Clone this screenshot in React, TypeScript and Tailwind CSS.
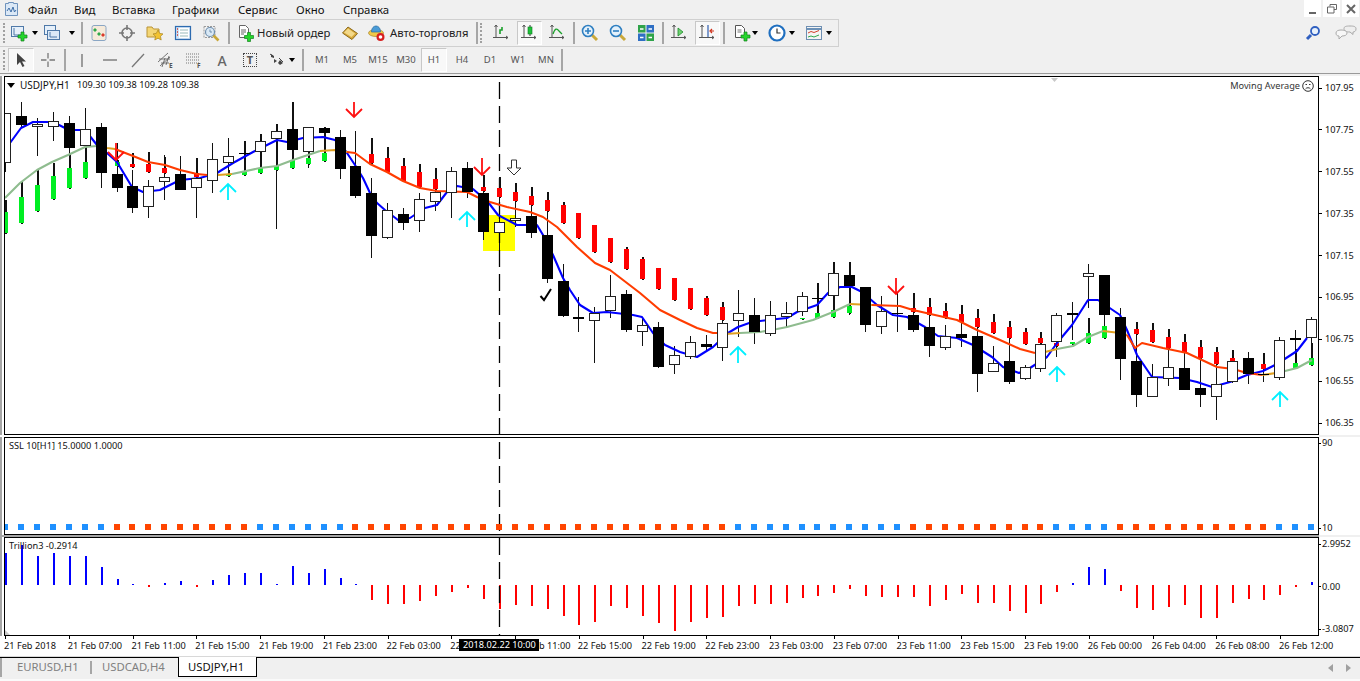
import type { ReactNode } from "react"

type Candle = [number, number, number, number, "w" | "b"]
type HaBar = [number, number, number, number, "r" | "g"]

// body top, body bottom, high, low (page pixels), index = bar number
const candles: Candle[] = [
  [113, 163, 113, 172, "w"], [116, 125, 102, 127, "b"], [124, 127, 118, 156, "w"], [121, 127, 112, 141, "w"],
  [123, 148, 116, 158, "b"], [129, 146, 108, 178, "w"], [127, 173, 123, 188, "b"], [174, 188, 143, 192, "b"],
  [186, 208, 170, 213, "b"], [186, 207, 180, 218, "w"], [177, 182, 155, 200, "w"], [174, 190, 156, 190, "b"],
  [178, 188, 158, 218, "w"], [159, 181, 143, 193, "w"], [156, 163, 138, 173, "w"], [153, 154, 141, 176, "b"],
  [141, 152, 134, 171, "w"], [131, 139, 124, 229, "w"], [129, 150, 102, 160, "b"], [127, 152, 127, 168, "w"],
  [128, 133, 127, 150, "b"], [137, 169, 130, 179, "b"], [166, 196, 131, 198, "b"], [193, 236, 178, 258, "b"],
  [210, 238, 203, 239, "w"], [214, 223, 208, 230, "b"], [199, 221, 193, 232, "w"], [192, 202, 168, 211, "w"],
  [171, 193, 167, 218, "w"], [168, 192, 162, 198, "b"], [193, 232, 175, 240, "b"], [222, 233, 177, 262, "w"],
  [218, 221, 183, 227, "w"], [216, 233, 187, 238, "b"], [235, 279, 192, 283, "b"], [281, 316, 264, 317, "b"],
  [317, 319, 297, 332, "b"], [313, 321, 307, 363, "w"], [296, 311, 275, 318, "w"], [294, 330, 290, 332, "b"],
  [325, 332, 317, 346, "w"], [327, 367, 322, 368, "b"], [355, 365, 346, 374, "w"], [342, 357, 336, 359, "w"],
  [344, 347, 335, 350, "b"], [323, 348, 302, 361, "w"], [313, 321, 290, 337, "w"], [315, 332, 298, 344, "b"],
  [315, 334, 301, 336, "w"], [313, 317, 302, 328, "w"], [296, 312, 292, 316, "w"], [298, 299, 283, 318, "b"],
  [273, 296, 262, 318, "w"], [275, 286, 262, 315, "b"], [287, 325, 287, 332, "b"], [311, 327, 296, 334, "w"],
  [313, 314, 293, 332, "b"], [315, 330, 293, 332, "b"], [327, 346, 298, 357, "b"], [336, 348, 325, 350, "w"],
  [334, 338, 305, 347, "b"], [336, 374, 309, 392, "b"], [363, 372, 346, 372, "w"], [361, 382, 321, 384, "b"],
  [367, 379, 365, 380, "w"], [344, 369, 332, 372, "w"], [315, 342, 313, 357, "w"], [313, 315, 302, 340, "b"],
  [273, 277, 264, 308, "w"], [275, 315, 275, 338, "b"], [317, 359, 308, 380, "b"], [361, 395, 322, 407, "b"],
  [377, 397, 364, 397, "w"], [367, 379, 329, 386, "w"], [368, 390, 334, 390, "b"], [388, 395, 340, 407, "b"],
  [384, 397, 347, 420, "w"], [361, 382, 350, 383, "w"], [358, 374, 352, 384, "b"], [374, 375, 353, 382, "b"],
  [340, 378, 337, 380, "w"], [338, 340, 330, 365, "b"], [319, 338, 317, 365, "w"],
]

// bar number, wick top, body top, body bottom, colour
const haBars: HaBar[] = [
  [0, 200, 212, 233, "g"], [1, 181, 197, 223, "g"], [2, 169, 185, 211, "g"], [3, 163, 176, 199, "g"],
  [4, 153, 168, 188, "g"], [5, 147, 162, 178, "g"], [7, 160, 162, 166, "g"], [8, 153, 164, 167, "r"],
  [9, 152, 164, 172, "r"], [10, 157, 168, 173, "r"], [12, 158, 173, 177, "r"], [14, 170, 174, 176, "g"],
  [15, 141, 172, 175, "g"], [16, 134, 168, 173, "g"], [17, 124, 166, 170, "g"], [18, 102, 160, 168, "g"],
  [19, 127, 158, 164, "g"], [20, 127, 153, 161, "g"],
  [23, 138, 154, 163, "r"], [24, 147, 158, 172, "r"], [25, 158, 166, 181, "r"], [26, 164, 172, 187, "r"],
  [27, 168, 179, 189, "r"], [30, 175, 187, 191, "r"], [31, 177, 188, 197, "r"], [32, 183, 192, 201, "r"],
  [33, 187, 196, 205, "r"], [34, 192, 200, 211, "r"], [35, 202, 205, 223, "r"], [36, 213, 213, 238, "r"],
  [37, 225, 225, 252, "r"], [38, 238, 238, 262, "r"], [39, 247, 249, 269, "r"], [40, 257, 259, 279, "r"],
  [41, 268, 268, 289, "r"], [42, 278, 278, 300, "r"], [43, 288, 288, 309, "r"], [44, 296, 298, 315, "r"],
  [45, 302, 307, 320, "r"], [50, 318, 318, 319, "g"], [51, 283, 313, 318, "g"], [52, 262, 310, 317, "g"],
  [53, 262, 306, 313, "g"], [57, 293, 308, 312, "r"], [58, 298, 307, 315, "r"], [59, 303, 311, 318, "r"],
  [60, 305, 314, 322, "r"], [61, 309, 318, 327, "r"], [62, 314, 322, 333, "r"], [63, 321, 327, 338, "r"],
  [64, 328, 332, 344, "r"], [65, 332, 338, 343, "r"], [66, 338, 343, 346, "r"], [67, 342, 342, 344, "g"],
  [68, 318, 333, 343, "g"], [69, 326, 326, 338, "g"], [71, 322, 329, 334, "r"], [72, 323, 330, 342, "r"],
  [73, 329, 337, 348, "r"], [74, 334, 342, 352, "r"], [75, 340, 347, 358, "r"], [76, 347, 352, 364, "r"],
  [77, 350, 358, 361, "r"], [79, 353, 364, 369, "r"], [81, 349, 363, 368, "g"], [82, 343, 358, 365, "g"],
]

const blueLine =
  "10,143 21,128 33,122 53,122 69,130 85,130 101,150 107,153 117,162 132,187 143,192 160,190 180,180 200,178 217,173 233,163 253,152 277,140 287,142 303,138 323,137 335,140 345,150 355,165 363,178 370,193 377,203 385,210 398,220 410,218 425,208 437,205 447,192 457,186 473,189 488,202 498,215 517,225 537,225 543,235 553,255 563,278 570,290 580,305 593,313 607,312 633,315 642,317 653,333 665,345 680,352 697,357 713,347 728,333 738,327 752,322 777,319 787,318 797,312 817,305 828,293 840,287 852,287 862,292 877,305 893,315 907,317 925,327 938,336 957,338 973,345 992,357 1003,367 1019,373 1030,368 1047,357 1057,343 1072,325 1088,300 1098,300 1120,315 1127,330 1137,355 1152,377 1180,378 1197,382 1212,387 1230,382 1247,375 1263,371 1277,364 1297,351 1307,338"

const redLines = [
  "115,149 133,156 148,162 165,165 180,170 197,174 207,175",
  "347,152 355,153 370,164 387,172 403,181 420,188 437,191 467,192 477,197 490,202 507,207 530,212 543,217 557,227 577,247 595,263 610,270 640,293 660,310 680,320 697,328 713,333 725,333",
  "872,305 900,306 913,310 957,320 977,330 1000,340 1020,349 1035,353",
  "1127,335 1135,348 1142,343 1163,348 1187,353 1217,367 1233,369 1247,373 1262,375",
]
const greenLines = [
  "5,198 20,183 37,170 52,162 68,155 85,147 97,146",
  "232,174 260,168 277,166 293,160 320,151",
  "740,333 760,332 777,329 787,327 813,320 833,312 850,304",
  "1057,349 1073,346 1088,337 1103,331",
  "1276,373 1285,371 1297,368 1312,360",
]
const goldLines = [
  "97,146 107,148 115,149",
  "207,175 218,175 232,174",
  "320,151 335,150 347,152",
  "725,334 740,333",
  "850,304 872,305",
  "1035,353 1045,352 1057,349",
  "1103,331 1120,333 1127,335",
  "1262,375 1276,373",
]

const downArrows: [number, number, number][] = [[354, 102, 117], [482, 158, 175], [896, 278, 294], [116, 143, 160]]
const upArrows: [number, number, number][] = [[228, 184, 200], [467, 212, 227], [738, 347, 363], [1057, 367, 382], [1280, 392, 407]]

const priceLabels = ["107.95", "107.75", "107.55", "107.35", "107.15", "106.95", "106.75", "106.55", "106.35"]
// two labels are partly covered by the crosshair's date box, only the visible part is kept
const timeLabels = [
  "21 Feb 2018", "21 Feb 07:00", "21 Feb 11:00", "21 Feb 15:00", "21 Feb 19:00", "21 Feb 23:00", "22 Feb 03:00",
  "22", "b 11:00", "22 Feb 15:00", "22 Feb 19:00", "22 Feb 23:00", "23 Feb 03:00", "23 Feb 07:00",
  "23 Feb 11:00", "23 Feb 15:00", "23 Feb 19:00", "26 Feb 00:00", "26 Feb 04:00", "26 Feb 08:00", "26 Feb 12:00",
]

// bottom (red) or top (blue) end of each histogram bar, zero line at 585
const trillion = [
  553, 545, 556, 553, 556, 556, 567, 579, 584, 587, 583, 581, 587, 580, 575, 573, 573, 584, 566, 573, 569, 578, 584,
  600, 604, 604, 601, 596, 592, 588, 599, 609, 605, 606, 609, 616, 625, 622, 606, 608, 616, 623, 631, 622, 618, 617,
  606, 604, 604, 603, 598, 596, 593, 589, 596, 597, 597, 597, 606, 600, 594, 603, 603, 611, 613, 604, 592, 583, 567,
  569, 591, 608, 610, 607, 605, 618, 618, 603, 599, 600, 595, 587, 582,
]

const barX = (i: number) => Math.round(5 + 15.93 * i)
const sslBlue = (i: number) => i <= 6 || (i >= 16 && i <= 21) || (i >= 46 && i <= 56) || (i >= 66 && i <= 69) || i >= 80

function Crosshair() {
  return <line x1={499.5} x2={499.5} y1={58} y2={700} stroke="#000" strokeWidth={1.3} strokeDasharray="17 7" />
}

function MainChart() {
  return (
    <svg className="block w-[1313px] h-[357px]" viewBox="5 77 1313 357">
      <rect x={483} y={215} width={32} height={36} fill="#ffff00" />
      <path d="M1051 78h7l-3.5 4z" fill="#c8c8c8" />
      <g shapeRendering="crispEdges">
        {candles.map((c, i) => (
          <rect key={i} x={barX(i)} y={c[2]} width={1} height={c[3] - c[2]} fill="#111" />
        ))}
      </g>
      <Crosshair />
      <g shapeRendering="crispEdges">
        {haBars.map(([i, wick, top, bot, col]) => (
          <g key={i}>
            <rect x={barX(i) - 0.5} y={wick} width={2} height={bot - wick + 1} fill="#111" />
            <rect x={barX(i) - 2} y={top} width={5} height={bot - top} fill={col === "r" ? "#ff0000" : "#00ee22"} />
          </g>
        ))}
      </g>
      <g fill="none" strokeWidth={2.1} strokeLinejoin="round">
        <polyline points={blueLine} stroke="#0000ff" />
        {greenLines.map((p) => <polyline key={p} points={p} stroke="#8fbc8f" />)}
        {goldLines.map((p) => <polyline key={p} points={p} stroke="#e0a020" />)}
        {redLines.map((p) => <polyline key={p} points={p} stroke="#ff3c00" />)}
      </g>
      <g shapeRendering="crispEdges">
        {candles.map((c, i) => {
          const h = c[1] - c[0]
          return c[4] === "b" ? (
            <rect key={i} x={barX(i) - 5} y={c[0]} width={11} height={h} fill="#000" />
          ) : (
            <rect key={i} x={barX(i) - 4.5} y={c[0] + 0.5} width={10} height={h - 1} fill="#fff" stroke="#222" />
          )
        })}
      </g>
      <g fill="none" strokeWidth={1.8}>
        {downArrows.map(([x, top, tip]) => (
          <path key={x} d={`M${x} ${top}V${tip}M${x - 8} ${tip - 8}L${x} ${tip}L${x + 8} ${tip - 8}`} stroke="#ff1010" />
        ))}
        {upArrows.map(([x, tip, bot]) => (
          <path key={x} d={`M${x} ${bot}V${tip}M${x - 8} ${tip + 8}L${x} ${tip}L${x + 8} ${tip + 8}`} stroke="#00f0ff" />
        ))}
      </g>
      <path d="M511.5 160h5v8h4.500l-7 7-7-7h4.500z" fill="#fff" stroke="#333" strokeWidth={1} />
      <path d="M540.5 296l3.500 4 7-11" fill="none" stroke="#000" strokeWidth={2} />
    </svg>
  )
}

function SslChart() {
  return (
    <svg className="block w-[1313px] h-[96px]" viewBox="5 438 1313 96">
      <Crosshair />
      <g shapeRendering="crispEdges">
        {candles.map((_, i) => (
          <rect key={i} x={barX(i) - 3} y={524} width={6} height={6} fill={sslBlue(i) ? "#1e90ff" : "#ff4500"} />
        ))}
      </g>
    </svg>
  )
}

function TrillionChart() {
  return (
    <svg className="block w-[1313px] h-[97px]" viewBox="5 538 1313 97">
      <path d="M5 635v-5l5 5z" fill="#c8c8c8" />
      <g shapeRendering="crispEdges">
        {trillion.map((v, i) => (
          <rect
            key={i}
            x={barX(i) - 0.5}
            y={Math.min(v, 585)}
            width={2}
            height={Math.max(Math.abs(v - 585), 1)}
            fill={v > 585 ? "#ff0000" : "#0000ff"}
          />
        ))}
      </g>
      <Crosshair />
    </svg>
  )
}

// toolbar bits
function Btn({ className = "", active, children }: { className?: string; active?: boolean; children: ReactNode }) {
  return (
    <div
      className={`flex items-center justify-center h-[24px] shrink-0 ${className} ${
        active ? "bg-[#f8f8f8] border border-[#c8c8c8] border-r-white border-b-white" : ""
      }`}
    >
      {children}
    </div>
  )
}
const Caret = () => <span className="w-0 h-0 shrink-0 border-x-[3px] border-t-[4px] border-x-transparent border-t-black" />
const Sep = ({ className }: { className: string }) => (
  <div className={`flex justify-center items-center shrink-0 ${className}`}>
    <span className="w-[2px] h-[22px] bg-[#a6a6a6]" />
  </div>
)
const Grip = () => (
  <div className="w-[8px] shrink-0 pl-[3px]">
    <span className="block w-[2px] h-[20px] border-l-2 border-dotted border-[#a0a0a0]" />
  </div>
)
const Ico = ({ children }: { children: ReactNode }) => (
  <svg width={18} height={18} viewBox="0 0 18 18" className="block shrink-0">
    {children}
  </svg>
)
const Plus = ({ x, y }: { x: number; y: number }) => (
  <path transform={`translate(${x} ${y})`} d="M3 0h3v3h3v3H6v3H3V6H0V3h3z" fill="#25d62c" stroke="#11801c" strokeWidth={0.7} />
)
const Axes = () => <path d="M4 1v13M1 13.5h15M2.5 3L4 1l1.5 2M14 12l2 1.5-2 1.5" fill="none" stroke="#555" strokeWidth={1} />

const Magnifier = ({ sign }: { sign: "+" | "-" }) => (
  <Ico>
    <path d="M10.5 10.5l5.500 5.500" stroke="#c9a83a" strokeWidth={3} />
    <circle cx={7} cy={7} r={5.5} fill="#e4f1fb" stroke="#2f7fc1" strokeWidth={1.6} />
    <path d={sign === "+" ? "M4 7h6M7 4v6" : "M4 7h6"} stroke="#2f7fc1" strokeWidth={1.6} />
  </Ico>
)

function TopBar() {
  const menu: [string, string][] = [
    ["Файл", "w-[46px]"], ["Вид", "w-[38px]"], ["Вставка", "w-[60px]"], ["Графики", "w-[66px]"],
    ["Сервис", "w-[58px]"], ["Окно", "w-[47px]"], ["Справка", "w-[60px]"],
  ]
  return (
    <div className="flex h-[19px] items-center text-[11.4px] text-[#111]">
      <div className="w-[28px] pl-[4px]">
        <svg width={15} height={15} viewBox="0 0 15 15" className="block">
          <path d="M1.5 1.5h3v-1h5v1h4v12h-12z" fill="#dbe8f6" stroke="#6f93bd" />
          <path d="M3 9l2-3 2 4 2-5 1.500 5L12 8" fill="none" stroke="#3f6fa8" />
        </svg>
      </div>
      {menu.map(([label, w]) => (
        <span key={label} className={w}>{label}</span>
      ))}
      <div className="ml-auto flex gap-[2px] pr-[1px] h-[17px] self-start">
        <div className="w-[17px] bg-white flex items-end justify-center pb-[3px]"><span className="w-[7px] h-[2px] bg-[#666]" /></div>
        <div className="w-[17px] bg-white flex items-center justify-center">
          <svg width={10} height={10} viewBox="0 0 10 10"><path d="M3 2.500V.5h6.500v5H7M.5 3h6.500v6H.5z" fill="none" stroke="#666" /></svg>
        </div>
        <div className="w-[17px] bg-white flex items-center justify-center">
          <svg width={10} height={10} viewBox="0 0 10 10"><path d="M1 1l8 8M9 1L1 9" stroke="#666" strokeWidth={2} /></svg>
        </div>
      </div>
    </div>
  )
}

function ToolbarOne() {
  return (
    <div className="flex h-[28px] items-center">
      <div className="flex items-center w-[839px] h-[28px] border-y border-r border-[#d0d0d0] text-[11.3px] text-[#222]">
        <Grip />
        <Btn className="w-[34px] justify-start pl-[2px] gap-[4px]">
          <Ico>
            <rect x={1.5} y={2.5} width={12} height={10} fill="#e6f0fa" stroke="#4f79a8" />
            <path d="M4 4v7h8" fill="none" stroke="#4f79a8" />
            <Plus x={8} y={8} />
          </Ico>
          <Caret />
        </Btn>
        <Btn className="w-[36px] justify-start pl-[1px] gap-[8px]">
          <Ico>
            <rect x={1.5} y={1.5} width={11} height={9} fill="#e6f0fa" stroke="#4f79a8" />
            <rect x={4.5} y={6.5} width={12} height={9} fill="#dce9f7" stroke="#4f79a8" />
            <path d="M7 8v5h7" fill="none" stroke="#4f79a8" />
          </Ico>
          <Caret />
        </Btn>
        <Sep className="w-[7px]" />
        <Btn className="w-[28px]">
          <Ico>
            <rect x={2} y={1.5} width={14} height={15} rx={2} fill="#f6ead9" stroke="#8aa6c4" />
            <path d="M5 4l2 2-2 2-2-2zM9 8l2 2-2 2-2-2z" fill="#2fa84a" />
            <path d="M13 9l2 2-2 2-2-2z" fill="#d93a2b" />
          </Ico>
        </Btn>
        <Btn className="w-[28px]">
          <Ico>
            <circle cx={9} cy={9} r={5} fill="none" stroke="#777" strokeWidth={1.6} />
            <path d="M9 1v5M9 12v5M1 9h5M12 9h5" stroke="#777" strokeWidth={1.6} />
          </Ico>
        </Btn>
        <Btn className="w-[28px]">
          <Ico>
            <path d="M1 3h5l1.500 2H13v8H1z" fill="#f4d675" stroke="#b99336" />
            <path d="M12 6l1.700 3.400 3.300.5-2.500 2.400.7 3.700-3.200-1.800-3.200 1.800.7-3.700L7 9.900l3.300-.5z" fill="#f2c230" stroke="#a9851f" strokeWidth={0.7} />
          </Ico>
        </Btn>
        <Btn className="w-[28px]">
          <Ico>
            <rect x={1.5} y={2.5} width={15} height={13} fill="#cfe3f7" stroke="#2d6bb0" strokeWidth={1.2} />
            <rect x={5} y={4} width={10} height={10} fill="#fff" />
            <path d="M6 6h8M6 9h8M6 12h8" stroke="#9bb" />
            <path d="M3 5h1M3 8h1M3 11h1" stroke="#d23b2b" strokeWidth={1.4} />
          </Ico>
        </Btn>
        <Btn className="w-[28px]">
          <Ico>
            <rect x={2} y={2.5} width={11} height={11} fill="#f2f2f2" stroke="#9a9a9a" strokeDasharray="2 1" />
            <path d="M11 11l5.500 5.500" stroke="#c9a83a" strokeWidth={2.6} />
            <circle cx={8} cy={8} r={4.5} fill="#d9e9f6" stroke="#6f8fae" strokeWidth={1.2} />
            <path d="M8 5.500V8h2" fill="none" stroke="#6f8fae" />
          </Ico>
        </Btn>
        <Sep className="w-[7px]" />
        <Btn className="w-[103px] justify-start pl-[4px] gap-[3px]">
          <Ico>
            <path d="M3.5 1.5h6l3 3v9h-9z" fill="#fff" stroke="#666" />
            <path d="M5 6h5M5 8h5M5 10h3" stroke="#666" />
            <Plus x={8.5} y={8.5} />
          </Ico>
          <span className="leading-none">Новый ордер</span>
        </Btn>
        <Btn className="w-[30px]">
          <Ico>
            <path d="M1.5 9L7 3l9.500 6.500-5.500 6z" fill="#d8a93a" stroke="#8c6a1b" />
            <path d="M3 8.500L7 4.500l7 5-3.500 3.500z" fill="#f3d98a" />
          </Ico>
        </Btn>
        <Btn className="w-[111px] justify-start pl-[3px] gap-[4px]">
          <Ico>
            <ellipse cx={8} cy={9} rx={7.5} ry={3.5} fill="#f0c848" stroke="#a8872a" strokeWidth={0.7} />
            <path d="M3.5 8c0-8 9-8 9 0z" fill="#4a9bd6" stroke="#2a6a9e" strokeWidth={0.7} />
            <circle cx={12.5} cy={13} r={4} fill="#d81e1e" />
            <circle cx={12.5} cy={13} r={1.8} fill="#fff" />
          </Ico>
          <span className="leading-none">Авто-торговля</span>
        </Btn>
        <div className="flex items-center gap-[2px] w-[11px] shrink-0">
          <span className="w-[2px] h-[22px] bg-[#a6a6a6]" />
          <span className="w-[3px] h-[20px] border-l-2 border-dotted border-[#a0a0a0]" />
        </div>
        <Btn className="w-[28px]"><Ico><Axes /><path d="M8 10V6h2V3" fill="none" stroke="#1aa02a" strokeWidth={1.6} /></Ico></Btn>
        <Btn className="w-[25px] mx-[1.5px]" active>
          <Ico><Axes /><path d="M10 1v11" stroke="#333" /><rect x={8} y={3} width={4} height={7} fill="#1fc23a" stroke="#0d7a1e" strokeWidth={0.6} /></Ico>
        </Btn>
        <Btn className="w-[28px]"><Ico><Axes /><path d="M5 10c2-6 4-6 6-3l3 3" fill="none" stroke="#1aa02a" strokeWidth={1.3} /></Ico></Btn>
        <Sep className="w-[5px]" />
        <Btn className="w-[28px]"><Magnifier sign="+" /></Btn>
        <Btn className="w-[28px]"><Magnifier sign="-" /></Btn>
        <Btn className="w-[28px]">
          <Ico>
            <rect x={1} y={1} width={7.5} height={7.5} fill="#2fa34a" />
            <rect x={9.5} y={1} width={7.5} height={7.5} fill="#2f6fc4" />
            <rect x={1} y={9.5} width={7.5} height={7.5} fill="#2f6fc4" />
            <rect x={9.5} y={9.5} width={7.5} height={7.5} fill="#2fa34a" />
            <path d="M3 5h3.500M11.500 5H15M3 13.500h3.500M11.500 13.500H15" stroke="#fff" strokeWidth={1.6} />
          </Ico>
        </Btn>
        <Sep className="w-[5px]" />
        <Btn className="w-[28px]"><Ico><Axes /><path d="M8 4l5 4-5 4z" fill="#6fd070" stroke="#1a8a2a" strokeWidth={0.8} /></Ico></Btn>
        <Btn className="w-[25px] mx-[1.5px]" active>
          <Ico><Axes /><path d="M10 1v12" stroke="#2f5fb0" strokeWidth={1.2} /><path d="M16 7h-3M14 5l-2 2 2 2" fill="none" stroke="#d0301a" strokeWidth={1.2} /></Ico>
        </Btn>
        <Sep className="w-[5px]" />
        <Btn className="w-[36px] justify-start pl-[7px] gap-[1px]">
          <Ico>
            <path d="M2.5 1.5h6l3 3v9h-9z" fill="#fff" stroke="#555" />
            <path d="M4.5 6h4M4.5 8h4" stroke="#777" />
            <Plus x={8} y={8} />
          </Ico>
          <Caret />
        </Btn>
        <Btn className="w-[37px] justify-start pl-[6px] gap-[3px]">
          <Ico>
            <circle cx={9} cy={9} r={7.5} fill="#fff" stroke="#1f6fc0" strokeWidth={2.2} />
            <path d="M9 4.500V9h3.500" fill="none" stroke="#333" strokeWidth={1.2} />
          </Ico>
          <Caret />
        </Btn>
        <Btn className="w-[37px] justify-start pl-[6px] gap-[3px]">
          <Ico>
            <rect x={1.5} y={2.5} width={15} height={13} fill="#f4f4f4" stroke="#6e8fb2" />
            <path d="M2 5h14" stroke="#4a78a8" strokeWidth={1.6} />
            <path d="M3 9l3-1.500 3 1 5-2" fill="none" stroke="#d2402c" />
            <path d="M3 13l3-1 3 1 5-2" fill="none" stroke="#2fa84a" />
          </Ico>
          <Caret />
        </Btn>
      </div>
      <div className="ml-auto flex items-center gap-[14px] pr-[3px]">
        <svg width={16} height={16} viewBox="0 0 16 16">
          <path d="M6 10l-4 4" stroke="#2f5fc0" strokeWidth={3} />
          <circle cx={10} cy={6} r={4} fill="#e8f1fb" stroke="#2f5fc0" strokeWidth={1.8} />
        </svg>
        <svg width={22} height={16} viewBox="0 0 22 16">
          <path d="M9 3.500C9 1.500 11 1 15 1s6 .5 6 3-2 3-3 3v2.500L15 7c-4 0-6-1-6-3.500z" fill="#eee" stroke="#aaa" />
          <path d="M1 8c0-2 2-3 5-3s6 1 6 3-2 3-5 3l-3 3v-3c-2 0-3-1-3-3z" fill="#f7f7f7" stroke="#aaa" />
        </svg>
      </div>
    </div>
  )
}

function ToolbarTwo() {
  const tfs = ["M1", "M5", "M15", "M30", "H1", "H4", "D1", "W1", "MN"]
  return (
    <div className="flex h-[26px] items-center text-[#555]">
      <Grip />
      <Btn className="w-[26px]" active>
        <svg width={14} height={16} viewBox="0 0 14 16"><path d="M3 1v12l3-3 2.500 5 2-1-2.500-4.500H12z" fill="#444" /></svg>
      </Btn>
      <Btn className="w-[28px]">
        <Ico><path d="M9 2v5.500M9 10.500V16M2 9h5.500M10.500 9H16" stroke="#777" strokeWidth={1.3} /></Ico>
      </Btn>
      <Sep className="w-[6px]" />
      <Btn className="w-[28px]"><Ico><path d="M9 3v13" stroke="#777" strokeWidth={1.4} /></Ico></Btn>
      <Btn className="w-[28px]"><Ico><path d="M2 9h14" stroke="#777" strokeWidth={1.4} /></Ico></Btn>
      <Btn className="w-[28px]"><Ico><path d="M3 16L15 3" stroke="#777" strokeWidth={1.3} /></Ico></Btn>
      <Btn className="w-[28px]">
        <Ico>
          <path d="M1 11L11 2M3 15L13 6M5 16l3-9M9 14l3-9M2 8h11M4 12h8" stroke="#666" strokeWidth={0.9} />
          <text x={12} y={16.5} fontSize={6.5} fontWeight={700} fill="#555">E</text>
        </Ico>
      </Btn>
      <Btn className="w-[28px]">
        <Ico>
          <path d="M1 3h13M1 6h13M1 9h13M1 12h13" stroke="#777" strokeDasharray="1 1" />
          <text x={12} y={16.5} fontSize={6.5} fontWeight={700} fill="#555">F</text>
        </Ico>
      </Btn>
      <Btn className="w-[28px]"><span className="text-[14px] font-medium text-[#666]">A</span></Btn>
      <Btn className="w-[28px]">
        <span className="flex items-center justify-center w-[14px] h-[14px] border border-dotted border-[#444] text-[11px] font-bold text-[#555]">T</span>
      </Btn>
      <Btn className="w-[36px] justify-start pl-[4px] gap-[3px]">
        <Ico>
          <path d="M3 3l3 2v2L3 6zM6 8l3 2-3 2zM12 9l3 3-3 2-2-2z" fill="#444" />
          <path d="M2 3l4 3M11 7l4 4" stroke="#444" />
        </Ico>
        <Caret />
      </Btn>
      <Sep className="w-[5px]" />
      <div className="flex pl-[3px] text-[9.5px]">
        {tfs.map((tf) => (
          <Btn key={tf} className={tf === "H1" ? "w-[26px] mx-[1px]" : "w-[28px]"} active={tf === "H1"}>
            {tf}
          </Btn>
        ))}
      </div>
      <Sep className="w-[4px]" />
    </div>
  )
}

function Panel({ className, children, axis }: { className: string; children: ReactNode; axis: ReactNode }) {
  return (
    <div className={`flex ${className}`}>
      <div className="w-[2px] bg-[#a6a6a6]" />
      <div className="w-[2px] bg-white" />
      <div className="relative w-[1315px] border border-black bg-white">{children}</div>
      <div className="w-[41px] bg-white text-[9.2px] leading-[12px] text-[#111]">{axis}</div>
    </div>
  )
}

const Tick = ({ label, wide }: { label: string; wide?: boolean }) => (
  <div className={`flex items-center ${wide ? "gap-[3px]" : "gap-[1px]"}`}>
    <span className={`h-px bg-black ${wide ? "w-[3px]" : "w-[2px]"}`} />
    <span>{label}</span>
  </div>
)

export default function App() {
  return (
    <div className="w-[1360px] h-[681px] overflow-hidden bg-[#f0f0f0] font-['Noto_Sans',sans-serif]">
      <TopBar />
      <ToolbarOne />
      <ToolbarTwo />
      <div className="h-[3px] border-t border-[#9a9a9a]" />

      <Panel
        className="h-[359px]"
        axis={
          <div className="pt-[6px]">
            {priceLabels.map((p) => (
              <div key={p} className="h-[41.9px]"><Tick label={p} wide /></div>
            ))}
          </div>
        }
      >
        <MainChart />
        <div className="absolute left-[2px] top-[2px] flex items-center gap-[5px] text-[10px] leading-[12px] text-[#111] whitespace-pre">
          <span className="w-0 h-0 border-x-[4px] border-t-[5px] border-x-transparent border-t-black" />
          <span className="w-[52px]">USDJPY,H1</span>
          <span className="text-[9.2px]">109.30 109.38 109.28 109.38</span>
        </div>
        <div className="absolute right-[4px] top-[3px] flex items-center gap-[2px] text-[9.2px] leading-[12px] text-[#333]">
          <span>Moving Average</span>
          <svg width={12} height={12} viewBox="0 0 12 12">
            <circle cx={6} cy={6} r={5.3} fill="none" stroke="#333" />
            <path d="M3.500 9c1-1.700 4-1.700 5 0M3.500 4.500h1.500M7 4.500h1.500" fill="none" stroke="#333" />
          </svg>
        </div>
      </Panel>
      <div className="w-[1319px] h-[2px] bg-white" />

      <Panel
        className="h-[98px]"
        axis={
          <div className="flex flex-col justify-between h-full pb-[1px]">
            <Tick label="90" />
            <Tick label="10" />
          </div>
        }
      >
        <SslChart />
        <div className="absolute left-[4px] top-[2px] text-[9.2px] leading-[12px] text-[#111]">SSL 10[H1] 15.0000 1.0000</div>
      </Panel>
      <div className="w-[1319px] h-[2px] bg-[#a6a6a6]" />

      <Panel
        className="h-[99px]"
        axis={
          <div className="flex flex-col justify-between h-full py-[1px]">
            <Tick label="2.9952" />
            <Tick label="0.00" />
            <Tick label="-3.0807" />
          </div>
        }
      >
        <TrillionChart />
        <div className="absolute left-[4px] top-[2px] text-[9.2px] leading-[12px] text-[#111]">Trillion3 -0.2914</div>
      </Panel>

      <div className="relative flex h-[21px] bg-white pl-[4px] border-b border-[#d8d8d8] text-[9.2px] leading-[12px] text-[#111]">
        {timeLabels.map((t) => (
          <div key={t} className="w-[63.75px] shrink-0 whitespace-nowrap">
            <span className="block w-px h-[3px] ml-[1px] bg-black" />
            <span className={t === "b 11:00" ? "block pt-[1px] pl-[25px]" : "block pt-[1px]"}>{t}</span>
          </div>
        ))}
        <div className="absolute left-[459px] top-[3px] w-[80px] h-[12px] bg-black text-white pl-[4px] whitespace-nowrap">
          2018.02.22 10:00
        </div>
      </div>

      <div className="flex h-[20px] border-t border-black text-[11.3px] text-[#808080]">
        <div className="w-[2px] bg-[#a6a6a6]" />
        <span className="pl-[15px] w-[88px] leading-[18px]">EURUSD,H1</span>
        <span className="self-center w-[2px] h-[13px] bg-[#a6a6a6]" />
        <span className="pl-[10px] w-[86px] leading-[18px]">USDCAD,H4</span>
        <span className="w-[79px] h-[20px] -mt-[1px] pl-[9px] leading-[19px] bg-white text-[#111] border-x border-b border-black">USDJPY,H1</span>
        <div className="ml-auto flex items-center gap-[13px] pr-[9px]">
          <span className="w-0 h-0 border-y-[4px] border-r-[5px] border-y-transparent border-r-[#a0a0a0]" />
          <span className="w-0 h-0 border-y-[4px] border-l-[5px] border-y-transparent border-l-[#a0a0a0]" />
        </div>
      </div>
      <div className="h-[2px] bg-[#f0f0f0]" />
      <div className="h-[2px] bg-[#fafafa]" />
    </div>
  )
}
